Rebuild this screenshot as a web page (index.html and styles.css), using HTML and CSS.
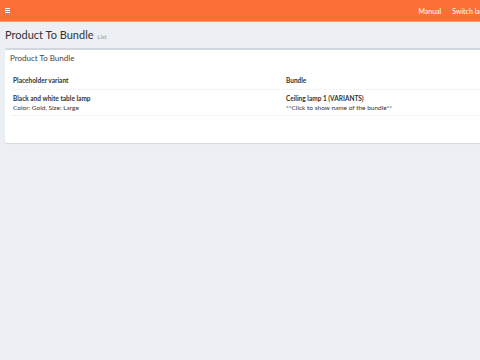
FILE: index.html
```html
<!DOCTYPE html>
<html lang="en">
<head>
    <meta charset="UTF-8">
    <meta name="viewport" content="width=device-width, initial-scale=1.0">
    <title>Product To Bundle</title>
    <link rel="stylesheet" href="styles.css">
</head>
<body>
    <header class="topbar">
        <span class="menu-toggle">
            <svg width="5" height="5" viewBox="0 0 5 5"><rect y="0" width="5" height="1" fill="#fff"/><rect y="2" width="5" height="1" fill="#fff"/><rect y="4" width="5" height="1" fill="#fff"/></svg>
        </span>
        <nav class="topnav">
            <a href="#">Manual</a>
            <a href="#">Switch language</a>
        </nav>
    </header>

    <div class="content-header">
        <h1>Product To Bundle <small>List</small></h1>
    </div>

    <section class="content">
        <div class="box">
            <div class="box-header">Product To Bundle</div>
            <div class="box-body">
                <table class="grid">
                    <thead>
                        <tr>
                            <th>Placeholder variant</th>
                            <th>Bundle</th>
                        </tr>
                    </thead>
                    <tbody>
                        <tr>
                            <td><strong>Black and white table lamp</strong><br>Color: Gold, Size: Large</td>
                            <td><strong>Ceiling lamp 1 (VARIANTS)</strong><br>**Click to show name of the bundle**</td>
                        </tr>
                    </tbody>
                </table>
            </div>
        </div>
    </section>
</body>
</html>
```

FILE: styles.css
```css
html, body {
    overflow: hidden;
}
body {
    font-family: Lato, "Open Sans", sans-serif;
    margin: 0;
    width: 566px;
    height: 360px;
    background-color: #ecf0f5;
    color: #333;
}
.topbar {
    display: flex;
    align-items: center;
    justify-content: space-between;
    height: 21px;
    background-color: #fd7035;
    border-bottom: 1px solid #fb9a6b;
    padding: 0 64px 0 5px;
}
.menu-toggle {
    display: flex;
}
.topnav {
    display: flex;
    gap: 11px;
}
.topnav a {
    color: #fff;
    font-size: 7px;
    text-decoration: none;
}
.content-header {
    padding: 4px 5px 0;
}
.content-header h1 {
    margin: 0;
    font-size: 11px;
    font-weight: normal;
    color: #333;
    line-height: 18px;
}
.content-header small {
    font-size: 6px;
    color: #999;
    margin-left: 1px;
}
.content {
    padding: 2px 5px;
}
.box {
    background: #fff;
    border-top: 2px solid #d2d6de;
    border-radius: 2px;
    box-shadow: 0 1px 1px rgba(0, 0, 0, 0.1);
    height: 93px;
}
.box-header {
    font-size: 8px;
    line-height: 10px;
    color: #444;
    padding: 3px 5px;
}
.box-body {
    padding: 0 5px;
}
.grid {
    width: 100%;
    border-collapse: collapse;
    font-size: 6.5px;
}
.grid th, .grid td {
    text-align: left;
    vertical-align: top;
    width: 50%;
    line-height: 9px;
}
.grid th {
    padding: 10px 3px 4px;
    border-bottom: 1px solid #f4f4f4;
}
.grid td {
    padding: 4px 3px 3px;
    border-bottom: 1px solid #f4f4f4;
}
```
